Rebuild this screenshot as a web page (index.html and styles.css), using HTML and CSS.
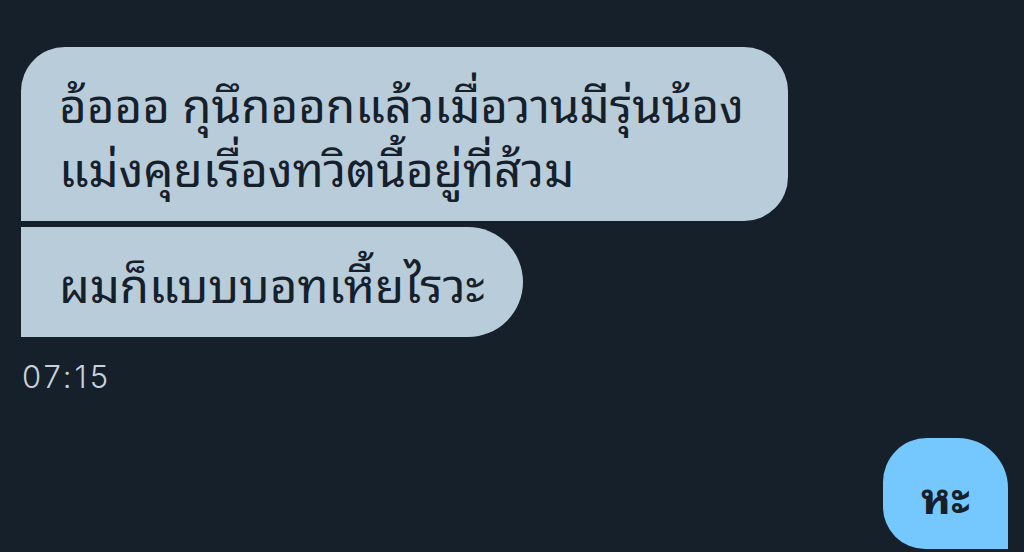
FILE: index.html
```html
<!DOCTYPE html>
<html lang="th">
<head>
<meta charset="utf-8">
<title>Chat</title>
<link rel="stylesheet" href="styles.css">
</head>
<body>
<main class="chat">
  <div class="group received">
    <div class="bubble bubble-first">
      <span class="line">อ้อออ กุนึกออกแล้วเมื่อวานมีรุ่นน้อง</span>
      <span class="line">แม่งคุยเรื่องทวิตนี้อยู่ที่ส้วม</span>
    </div>
    <div class="bubble bubble-last"><span class="line">ผมก็แบบบอทเหี้ยไรวะ</span></div>
    <div class="time">07:15</div>
  </div>
  <div class="group sent">
    <div class="bubble bubble-sent">หะ</div>
  </div>
</main>
</body>
</html>
```

FILE: styles.css
```css
html, body {
  margin: 0;
  padding: 0;
  height: 100%;
  overflow: hidden;
  background: #16202b;
}

.chat {
  display: flex;
  flex-direction: column;
  padding: 47px 16px 0 21px;
  font-family: "Noto Sans Thai Looped", "Garuda", "Umpush", "Waree", "Tlwg Typo", "Noto Sans Thai", sans-serif;
}

.group {
  display: flex;
  flex-direction: column;
  gap: 6px;
}

.received {
  align-items: flex-start;
}

.sent {
  align-items: flex-end;
  margin-top: 43px;
}

.bubble {
  box-sizing: border-box;
  background: #b9ccda;
  color: #16202b;
  font-size: 47.5px;
  line-height: 64px;
  padding: 23px 38px;
  white-space: nowrap;
}

.line {
  display: block;
  height: 64px;
}

.bubble-first {
  width: 767px;
  border-radius: 44px 44px 44px 0;
}

.bubble-last {
  border-radius: 0 55px 55px 0;
}

.time {
  margin-top: 16px;
  font-family: "Inter", "Liberation Sans", sans-serif;
  font-size: 31px;
  font-weight: 300;
  letter-spacing: 3px;
  line-height: 36px;
  color: #c6d1db;
  padding-left: 1px;
}

.bubble-sent {
  background: #74c8fd;
  width: 125px;
  height: 111px;
  padding: 0;
  display: flex;
  align-items: center;
  justify-content: center;
  font-size: 44px;
  font-weight: 700;
  border-radius: 44px 50px 0 42px;
}
```
